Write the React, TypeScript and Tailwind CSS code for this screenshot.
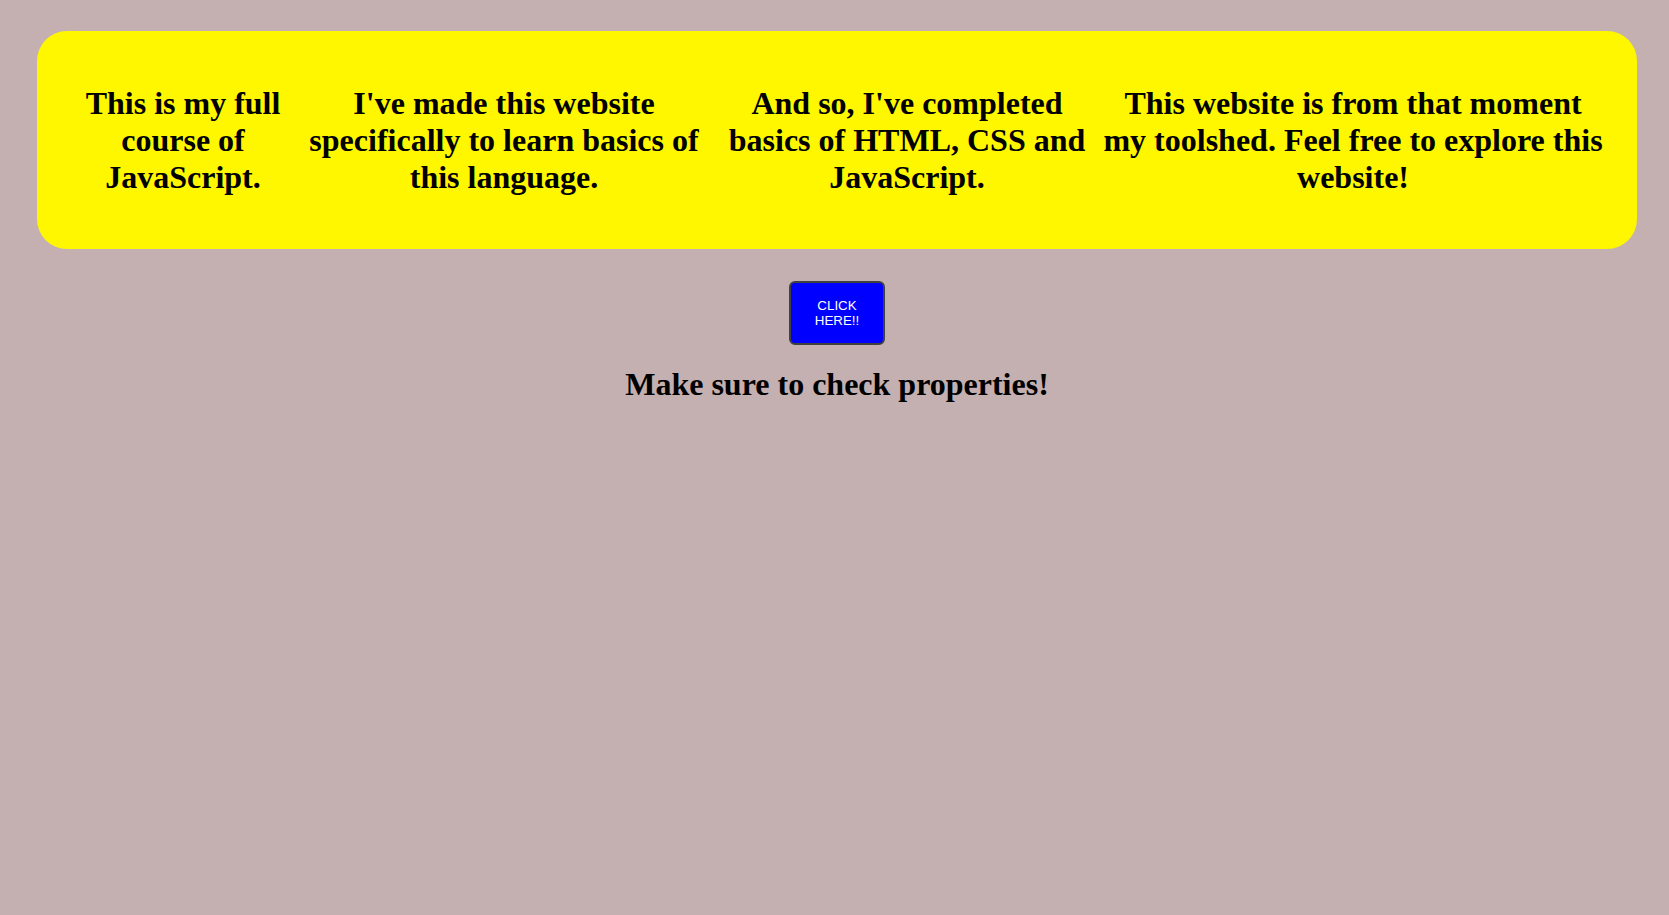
import React from "react";

export default function App() {
  const cols = [
    { w: "w-[214px]", t: "This is my full course of JavaScript." },
    { w: "w-[428px]", t: "I've made this website specifically to learn basics of this language." },
    { w: "w-[378px]", t: "And so, I've completed basics of HTML, CSS and JavaScript." },
    { w: "w-[502px] ml-[6px]", t: "This website is from that moment my toolshed. Feel free to explore this website!" },
  ];
  return (
    <div
      className="min-h-[915px] w-full bg-[#c4b0b0] pt-[31px] text-black"
      style={{ fontFamily: '"Liberation Serif", "Times New Roman", serif' }}
    >
      <div className="ml-[37px] mr-[32px] flex h-[218px] items-center rounded-[30px] bg-[#fff700] pl-[39px]">
        {cols.map((c, i) => (
          <h1
            key={i}
            className={`${c.w} shrink-0 text-center text-[32px] font-bold leading-[37px]`}
          >
            {c.t}
          </h1>
        ))}
      </div>
      <div className="ml-[37px] mr-[32px] flex flex-col items-center pt-[32px]">
        <button
          className="flex h-[64px] w-[96px] items-center justify-center rounded-[6px] border-2 border-[#404040] bg-[#0000ff] text-center text-[13.33px] leading-[15px] text-white"
          style={{ fontFamily: '"Liberation Sans", Arial, sans-serif' }}
        >
          CLICK
          <br />
          HERE!!
        </button>
        <h1 className="mt-[21px] text-[32px] font-bold leading-[37px]">
          Make sure to check properties!
        </h1>
      </div>
    </div>
  );
}
